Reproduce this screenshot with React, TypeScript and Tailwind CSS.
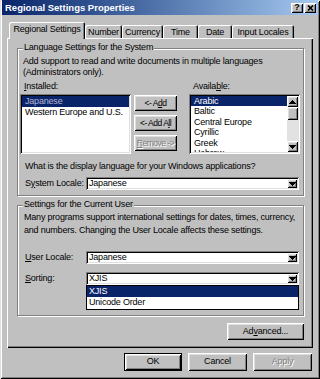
import * as React from 'react';

const raised =
  'shadow-[inset_1px_1px_0_#fff,inset_-1px_-1px_0_#000,inset_2px_2px_0_#dfdfdf,inset_-2px_-2px_0_#808080]';
const sunken =
  'shadow-[inset_1px_1px_0_#808080,inset_-1px_-1px_0_#fff,inset_2px_2px_0_#000,inset_-2px_-2px_0_#dfdfdf]';
const etched = 'border border-[#808080] shadow-[inset_1px_1px_0_#fff,1px_1px_0_#fff]';
const disabledText = 'text-[#808080] [text-shadow:1px_1px_0_#fff]';

const Arrow: React.FC<{ up?: boolean }> = ({ up }) => (
  <svg width="7" height="4" viewBox="0 0 7 4" shapeRendering="crispEdges" className={up ? 'rotate-180' : ''}>
    <path d="M0 0h7v1h-1v1h-1v1h-1v1h-1v-1h-1v-1h-1v-1h-1z" fill="#000" />
  </svg>
);

const Btn: React.FC<{ className?: string; disabled?: boolean; children: React.ReactNode }> = ({
  className = '',
  disabled,
  children,
}) => (
  <div
    className={`flex items-center justify-center whitespace-nowrap bg-[#c0c0c0] ${raised} ${disabled ? disabledText : ''} ${className}`}
  >
    {children}
  </div>
);

const U: React.FC<{ children: React.ReactNode }> = ({ children }) => <span className="underline">{children}</span>;

const Combo: React.FC<{ value: string; className?: string; children?: React.ReactNode }> = ({
  value,
  className = '',
  children,
}) => (
  <div className={`relative flex h-[13px] w-[213px] bg-white p-[2px] ${sunken} ${className}`}>
    <span className="flex-1 pl-[1px] leading-[9px]">{value}</span>
    <div className={`flex h-[9px] w-[10px] items-center justify-center bg-[#c0c0c0] ${raised}`}>
      <Arrow />
    </div>
    {children}
  </div>
);

const GroupBox: React.FC<{ title: string; className?: string; children: React.ReactNode }> = ({
  title,
  className = '',
  children,
}) => (
  <div className={`relative flex flex-col ${etched} ${className}`}>
    <span className="absolute left-[5px] top-[-7px] bg-[#c0c0c0] px-[1px] leading-[11px]">{title}</span>
    {children}
  </div>
);

const tabs = [
  { label: 'Number', w: 'w-[37px]' },
  { label: 'Currency', w: 'w-[41px]' },
  { label: 'Time', w: 'w-[35px]' },
  { label: 'Date', w: 'w-[34px]' },
  { label: 'Input Locales', w: 'w-[62px]' },
];

const available = ['Arabic', 'Baltic', 'Central Europe', 'Cyrillic', 'Greek', 'Hebrew'];

export default function App() {
  return (
    <div
      className="flex h-[379px] w-[320px] flex-col overflow-hidden bg-[#c0c0c0] font-['Liberation_Sans',Arial,sans-serif] text-[9px] tracking-[-0.2px] text-black shadow-[inset_1px_1px_0_#dfdfdf,inset_-1px_-1px_0_#000,inset_2px_2px_0_#fff,inset_-2px_-2px_0_#808080]"
    >
      {/* title bar */}
      <div className="mx-[2px] flex h-[15px] items-center bg-linear-to-r from-[#0a246a] to-[#a6caf0] pl-[3px] pr-[2px]">
        <span className="flex-1 pt-[1px] text-[9.5px] font-bold tracking-normal text-white">
          Regional Settings Properties
        </span>
        <Btn className="h-[10px] w-[12px] text-[9px] font-bold leading-none">?</Btn>
        <Btn className="ml-[1px] h-[10px] w-[12px]">
          <svg width="7" height="6" viewBox="0 0 7 6">
            <path d="M1 0.5l5 5M6 0.5l-5 5" stroke="#000" strokeWidth="1.6" />
          </svg>
        </Btn>
      </div>

      {/* tabs */}
      <div className="relative z-10 mt-[7px] flex h-[16px] items-end pl-[9px]">
        <div className="-mb-[1px] flex h-[17px] w-[76px] justify-center rounded-t-[2px] bg-[#c0c0c0] pt-[2px] leading-[11px] shadow-[inset_1px_1px_0_#fff,inset_-1px_0_0_#000,inset_-2px_0_0_#808080]">
          Regional Settings
        </div>
        {tabs.map((t) => (
          <div
            key={t.label}
            className={`flex h-[13px] ${t.w} justify-center rounded-t-[2px] pt-[1px] leading-[12px] shadow-[inset_1px_1px_0_#fff,inset_-1px_0_0_#000,inset_-2px_0_0_#808080]`}
          >
            {t.label}
          </div>
        ))}
      </div>

      {/* panel */}
      <div className="ml-[7px] flex h-[310px] w-[306px] flex-col pl-[10px] pr-[9px] pt-[10px] shadow-[inset_1px_1px_0_#fff,inset_-1px_-1px_0_#000,inset_-2px_-2px_0_#808080]">
        <GroupBox title="Language Settings for the System" className="h-[148px]">
          <p className="mt-[7px] whitespace-nowrap pl-[5px] leading-[11px]">
            Add support to read and write documents in multiple languages
            <br />
            (Administrators only).
          </p>
          <div className="mt-[3px] flex">
            <div className="ml-[2px] flex w-[111px] flex-col">
              <span className="pl-[4px] leading-[11px]">
                <U>I</U>nstalled:
              </span>
              <div className={`mt-[2px] h-[60px] bg-white p-[2px] ${sunken}`}>
                <div className="h-[10.5px] bg-[#0a246a] pl-[3px] leading-[10.5px] text-[#b4b4d4]">Japanese</div>
                <div className="h-[10.5px] pl-[3px] leading-[10.5px]">Western Europe and U.S.</div>
              </div>
            </div>
            <div className="ml-[3px] flex w-[43px] flex-col gap-[4px] pt-[14px] text-[8.5px] tracking-[-0.5px]">
              <Btn className="h-[16px]">
                &lt;- A<U>d</U>d
              </Btn>
              <Btn className="h-[16px]">
                &lt;- Add A<U>l</U>l
              </Btn>
              <Btn disabled className="h-[16px]">
                <U>R</U>emove -&gt;
              </Btn>
            </div>
            <div className="ml-[12px] flex w-[111px] flex-col">
              <span className="pl-[4px] leading-[11px]">
                Availa<U>b</U>le:
              </span>
              <div className={`mt-[2px] flex h-[60px] bg-white p-[2px] ${sunken}`}>
                <div className="flex-1 overflow-hidden">
                  {available.map((a, i) => (
                    <div
                      key={a}
                      className={`h-[10.4px] pl-[3px] leading-[10.4px] ${i === 0 ? 'bg-[#0a246a] text-white' : ''}`}
                    >
                      {a}
                    </div>
                  ))}
                </div>
                <div className="flex w-[11px] flex-col bg-[#e2e2e2]">
                  <Btn className="h-[11px]">
                    <Arrow up />
                  </Btn>
                  <Btn className="h-[13px]">{null}</Btn>
                  <div className="flex-1" />
                  <Btn className="h-[11px]">
                    <Arrow />
                  </Btn>
                </div>
              </div>
            </div>
          </div>
          <p className="mt-[7px] whitespace-nowrap pl-[7px] leading-[11px]">
            What is the display language for your Windows applications?
          </p>
          <div className="mt-[5px] flex items-center">
            <span className="w-[68px] pl-[7px] leading-[11px]">
              S<U>y</U>stem Locale:
            </span>
            <Combo value="Japanese" />
          </div>
        </GroupBox>

        <GroupBox title="Settings for the Current User" className="mt-[9px] h-[111px]">
          <p className="mt-[5px] whitespace-nowrap pl-[6px] leading-[13px]">
            Many programs support international settings for dates, times, currency,
            <br />
            and numbers. Changing the User Locale affects these settings.
          </p>
          <div className="mt-[14px] flex items-center">
            <span className="w-[68px] pl-[7px] leading-[11px]">
              <U>U</U>ser Locale:
            </span>
            <Combo value="Japanese" />
          </div>
          <div className="mt-[8px] flex items-center">
            <span className="w-[68px] pl-[7px] leading-[11px]">
              <U>S</U>orting:
            </span>
            <Combo value="XJIS">
              <div className="absolute left-0 top-[13px] z-20 flex h-[25px] w-[213px] flex-col border border-black bg-white">
                <div className="h-[11px] bg-[#0a246a] pl-[2px] leading-[11px] text-white">XJIS</div>
                <div className="h-[11px] pl-[2px] leading-[11px]">Unicode Order</div>
              </div>
            </Combo>
          </div>
        </GroupBox>

        <div className="mt-[7px] flex justify-end">
          <Btn className="h-[17px] w-[77px]">
            Ad<U>v</U>anced...
          </Btn>
        </div>
      </div>

      {/* dialog buttons */}
      <div className="mt-[5px] flex justify-end gap-[6px] pr-[8px]">
        <div className="h-[18px] w-[58px] border border-black">
          <Btn className="h-full w-full">OK</Btn>
        </div>
        <Btn className="h-[18px] w-[59px]">Cancel</Btn>
        <Btn disabled className="h-[18px] w-[59px]">
          Apply
        </Btn>
      </div>
    </div>
  );
}
